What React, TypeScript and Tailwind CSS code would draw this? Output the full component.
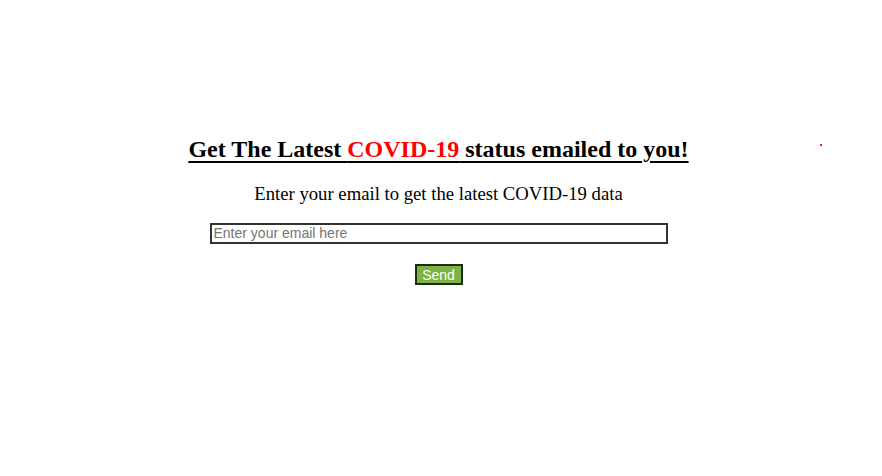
export default function App() {
  return (
    <div className="min-h-screen bg-white relative font-['Liberation_Serif',serif]">
      <div className="absolute left-[820px] top-[144px] w-[2px] h-[2px] bg-[#e02020]" />
      <div className="flex flex-col items-center pt-[135px] pr-[5px]">
        <h1 className="text-[24px] leading-[29px] font-bold underline underline-offset-[4px] decoration-[2px] text-black">
          Get The Latest <span className="text-[#ff0000]">COVID-19</span> status emailed to you!
        </h1>
        <p className="mt-[19px] text-[18.7px] leading-[22px] text-black">
          Enter your email to get the latest COVID-19 data
        </p>
        <input
          type="email"
          placeholder="Enter your email here"
          className="mt-[18px] w-[458px] h-[21px] border-2 border-[#333333] px-[2px] text-[14px] font-['Liberation_Sans',sans-serif] placeholder:text-[#757575] outline-none"
        />
        <button className="mt-[20px] w-[48px] h-[21px] bg-[#7cb342] border-2 border-[#1e2a14] text-white text-[14px] leading-none font-['Liberation_Sans',sans-serif]">
          Send
        </button>
      </div>
    </div>
  );
}
